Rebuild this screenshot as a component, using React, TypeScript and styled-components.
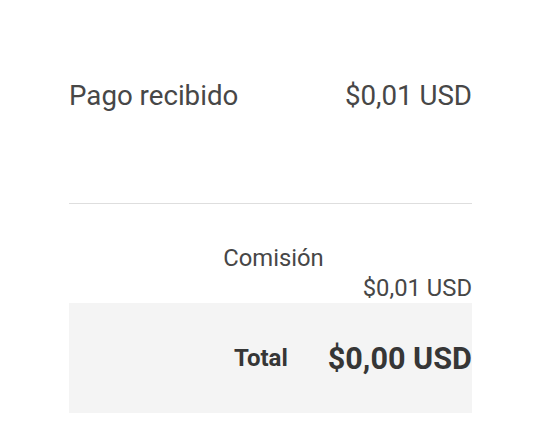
import React from "react";
import styled, { createGlobalStyle } from "styled-components";

const GlobalStyle = createGlobalStyle`
  body {
    margin: 0;
    background: #fff;
    font-family: Roboto, "Liberation Sans", sans-serif;
    color: #474747;
  }
`;

// Outer wrapper with side padding
const Page = styled.div`
  padding: 79px 68px 0 69px;
`;

const ReceivedRow = styled.div`
  display: flex;
  justify-content: space-between;
  align-items: baseline;
  font-size: 27.7px;
  line-height: 33px;
  padding-bottom: 91px;
  border-bottom: 1px solid #dedede;
`;

const FeeBlock = styled.div`
  display: flex;
  flex-direction: column;
  padding-top: 39px;
  font-size: 23.8px;
  line-height: 30px;
`;

const FeeLabel = styled.div`
  text-align: center;
  padding-left: 6px;
`;

const FeeValue = styled.div`
  text-align: right;
`;

const TotalBox = styled.div`
  display: flex;
  justify-content: flex-end;
  align-items: center;
  gap: 40px;
  background: #f4f4f4;
  height: 110px;
  font-weight: 700;
  color: #363636;
`;

const TotalLabel = styled.span`
  font-size: 24px;
`;

const TotalValue = styled.span`
  font-size: 30.6px;
`;

export default function App() {
  return (
    <Page>
      <GlobalStyle />
      <ReceivedRow>
        <span>Pago recibido</span>
        <span>$0,01 USD</span>
      </ReceivedRow>
      <FeeBlock>
        <FeeLabel>Comisión</FeeLabel>
        <FeeValue>$0,01 USD</FeeValue>
      </FeeBlock>
      <TotalBox>
        <TotalLabel>Total</TotalLabel>
        <TotalValue>$0,00 USD</TotalValue>
      </TotalBox>
    </Page>
  );
}
